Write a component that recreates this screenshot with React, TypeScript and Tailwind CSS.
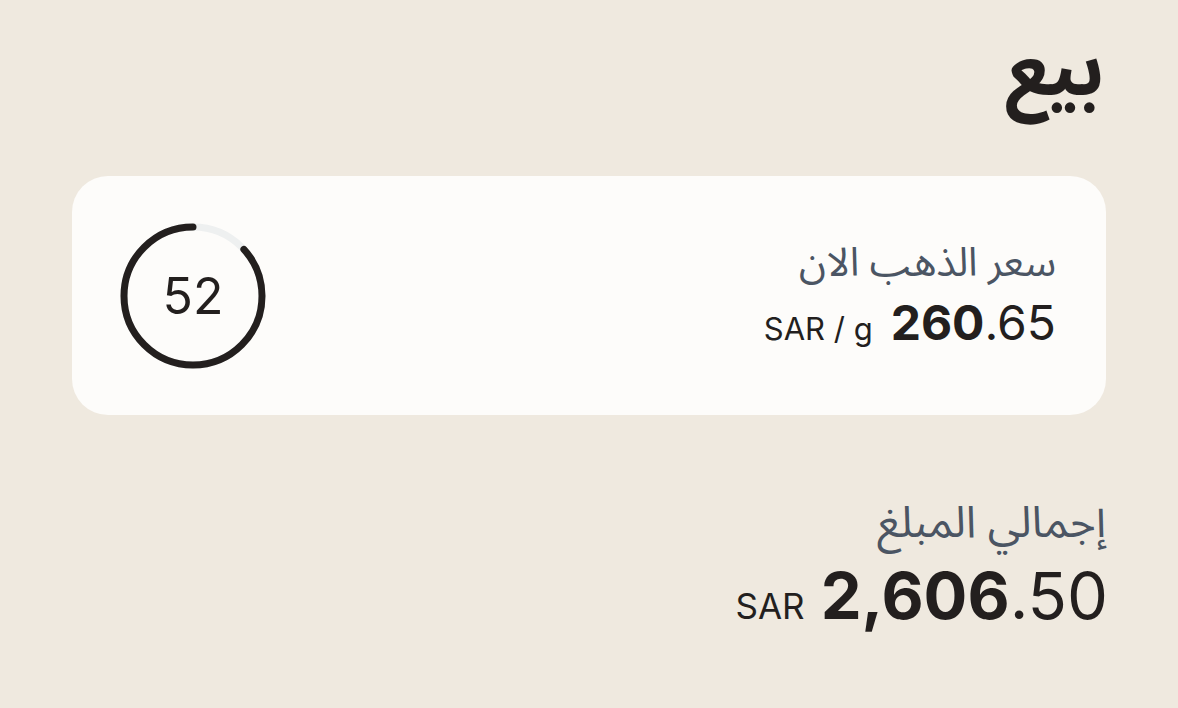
import React from "react";

function Timer({ value, total }: { value: number; total: number }) {
  const r = 69;
  const c = 2 * Math.PI * r;
  const frac = value / total;
  return (
    <div className="relative w-[146px] h-[146px] flex items-center justify-center">
      <svg width="146" height="146" viewBox="0 0 146 146" className="absolute inset-0">
        <circle cx="73" cy="73" r={r} fill="none" stroke="#eef0f0" strokeWidth="7" />
        <circle
          cx="73"
          cy="73"
          r={r}
          fill="none"
          stroke="#231f1e"
          strokeWidth="7"
          strokeLinecap="round"
          strokeDasharray={`${c * frac} ${c}`}
          transform="rotate(-90 73 73) scale(1 -1) translate(0 -146)"
        />
      </svg>
      <span className="relative text-[50px] leading-none text-[#231f1e] font-['Inter',sans-serif]">{value}</span>
    </div>
  );
}

export default function App() {
  const arabic = "font-['Noto_Sans_Arabic','Noto_Sans','DejaVu_Sans',sans-serif]";
  return (
    <div dir="rtl" className="min-h-screen w-full bg-[#efe9df] px-[72px] pt-[16px] text-[#231f1e]">
      <h1 className={`${arabic} text-[76px] font-bold leading-[110px] pr-[2px]`}>بيع</h1>
      <div className="mt-[50px] h-[239px] rounded-[36px] bg-[#fdfcfa] flex items-center justify-between pr-[50px] pl-[48px]">
        <div className="flex flex-col items-start">
          <div className={`${arabic} text-[40px] leading-[50px] text-[#4b5563]`}>سعر الذهب الان</div>
          <div dir="ltr" className="flex items-baseline gap-[18px] font-['Inter',sans-serif] mt-[6px]">
            <span className="text-[31px] text-[#231f1e]">SAR / g</span>
            <span className="text-[48px] leading-[56px] text-[#231f1e]">
              <span className="font-bold">260</span>.65
            </span>
          </div>
        </div>
        <Timer value={52} total={60} />
      </div>
      <div className="mt-[76px] flex flex-col items-start">
        <div className={`${arabic} text-[44px] leading-[64px] text-[#4b5563]`}>إجمالي المبلغ</div>
        <div dir="ltr" className="flex items-baseline gap-[16px] font-['Inter',sans-serif] mt-[6px] -mr-[2px]">
          <span className="text-[35px] text-[#231f1e]">SAR</span>
          <span className="text-[65px] leading-[70px] text-[#231f1e]">
            <span className="font-bold">2,606</span>.50
          </span>
        </div>
      </div>
    </div>
  );
}
